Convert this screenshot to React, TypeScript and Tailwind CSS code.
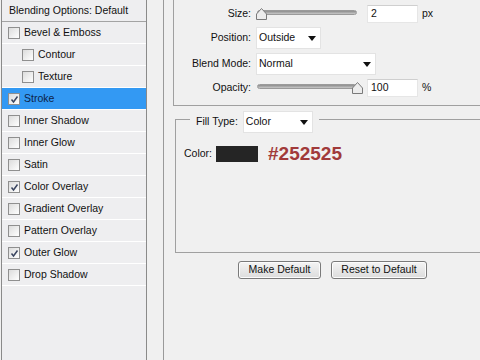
import React from "react"

// Photoshop layer style dialog – Stroke pane

const layers: { name: string; checked: boolean; indent?: boolean; selected?: boolean }[] = [
  { name: "Bevel & Emboss", checked: false },
  { name: "Contour", checked: false, indent: true },
  { name: "Texture", checked: false, indent: true },
  { name: "Stroke", checked: true, selected: true },
  { name: "Inner Shadow", checked: false },
  { name: "Inner Glow", checked: false },
  { name: "Satin", checked: false },
  { name: "Color Overlay", checked: true },
  { name: "Gradient Overlay", checked: false },
  { name: "Pattern Overlay", checked: false },
  { name: "Outer Glow", checked: true },
  { name: "Drop Shadow", checked: false },
]

function CheckBox({ checked }: { checked: boolean }) {
  return (
    <span className="w-[12px] h-[12px] shrink-0 border border-[#8f8f8f] bg-gradient-to-br from-[#dcdcdc] to-[#ffffff] flex items-center justify-center">
      {checked && (
        <svg width="9" height="9" viewBox="0 0 9 9">
          <path d="M1.5 4.5 L3.5 7 L7.5 1.5" fill="none" stroke="#3a4560" strokeWidth="1.5" />
        </svg>
      )}
    </span>
  )
}

function Arrow() {
  return (
    <svg width="8" height="5" viewBox="0 0 8 5" className="shrink-0">
      <path d="M0 0 L8 0 L4 5 Z" fill="#111" />
    </svg>
  )
}

function Select({ value, w }: { value: string; w: string }) {
  return (
    <div className={`${w} h-[22px] bg-white border border-[#e3e3e3] flex items-center justify-between pl-[2px] pr-[4px]`}>
      <span>{value}</span>
      <Arrow />
    </div>
  )
}

function Thumb() {
  return (
    <svg width="11" height="12" viewBox="0 0 11 12">
      <path d="M5.5 0.5 L10.5 6 L10.5 11.5 L0.5 11.5 L0.5 6 Z" fill="#ececec" stroke="#7a7a7a" />
    </svg>
  )
}

function Slider({ atEnd }: { atEnd?: boolean }) {
  return (
    <div className="relative w-[101px] h-[18px]">
      <div className="absolute left-[1px] right-0 top-[5px] h-[5px] rounded-full bg-gradient-to-b from-[#8c8c8c] to-[#c8c8c8] border border-[#9a9a9a]" />
      <div className={`absolute top-[3px] ${atEnd ? "left-[96px]" : "left-0"}`}>
        <Thumb />
      </div>
    </div>
  )
}

function NumBox({ value }: { value: string }) {
  return (
    <div className="w-[51px] h-[18px] bg-white border border-[#e6e6e6] border-t-[#cfcfcf] flex items-center pl-[3px]">
      {value}
    </div>
  )
}

function Row({ label, children, className = "" }: { label: string; children: React.ReactNode; className?: string }) {
  return (
    <div className={`flex items-center ${className}`}>
      <span className="w-[77px] text-right">{label}</span>
      <div className="ml-[5px] flex items-center">{children}</div>
    </div>
  )
}

function Button({ label, w }: { label: string; w: string }) {
  return (
    <div className={`${w} h-[18px] rounded-[3px] border border-[#7a7a7a] bg-gradient-to-b from-[#f4f4f4] to-[#dcdcdc] shadow-[inset_0_0_0_1px_#fcfcfc] flex items-center justify-center`}>
      {label}
    </div>
  )
}

export default function App() {
  return (
    <div className="w-[480px] h-[360px] overflow-hidden bg-[#f0f0f0] flex font-['Liberation_Sans',Arial,sans-serif] text-[10.5px] text-[#111]">
      {/* styles list */}
      <div className="ml-px w-[146px] h-full border-x border-[#8a8a8a] bg-[#eeeef0] flex flex-col">
        <div className="h-[22px] shrink-0 flex items-center pl-[7px] pt-px border-b border-[#a3a3a3]">
          Blending Options: Default
        </div>
        {layers.map((l) => (
          <div
            key={l.name}
            className={`h-[22px] shrink-0 flex items-center pt-px border-b border-white ${
              l.selected ? "bg-[#3399f3] text-[#0d2248]" : ""
            } ${l.indent ? "pl-[20px]" : "pl-[6px]"}`}
          >
            <CheckBox checked={l.checked} />
            <span className="ml-[4px]">{l.name}</span>
          </div>
        ))}
      </div>

      {/* settings */}
      <div className="ml-[16px] h-full flex-1 border-l border-[#9a9a9a] pl-[9px] flex flex-col">
        <div className="h-[106px] shrink-0 border-l border-b border-[#a0a0a0] flex flex-col">
          <Row label="Size:" className="mt-[5px] h-[18px]">
            <Slider />
            <div className="ml-[10px]"><NumBox value="2" /></div>
            <span className="ml-[4px]">px</span>
          </Row>
          <Row label="Position:" className="mt-[4px] h-[22px]">
            <Select value="Outside" w="w-[65px]" />
          </Row>
          <Row label="Blend Mode:" className="mt-[4px] h-[22px]">
            <Select value="Normal" w="w-[120px]" />
          </Row>
          <Row label="Opacity:" className="mt-[4px] h-[18px]">
            <Slider atEnd />
            <div className="ml-[10px]"><NumBox value="100" /></div>
            <span className="ml-[4px]">%</span>
          </Row>
        </div>

        <div className="relative mt-[13px] ml-[2px] h-[134px] shrink-0 border-l border-t border-b border-[#a0a0a0]">
          <div className="absolute left-[14px] top-[-9px] bg-[#f0f0f0] px-[6px] flex items-center">
            <span>Fill Type:</span>
            <div className="ml-[5px]">
              <Select value="Color" w="w-[70px]" />
            </div>
          </div>
          <div className="mt-[24px] pl-[8px] flex items-center">
            <span>Color:</span>
            <div className="ml-[4px] w-[42px] h-[16px] bg-[#252525]" />
            <span className="ml-[10px] font-bold text-[19px] leading-none text-[#a13a3a]">#252525</span>
          </div>
        </div>

        <div className="mt-[8px] ml-[65px] flex gap-[10px]">
          <Button label="Make Default" w="w-[83px]" />
          <Button label="Reset to Default" w="w-[96px]" />
        </div>
      </div>
    </div>
  )
}
